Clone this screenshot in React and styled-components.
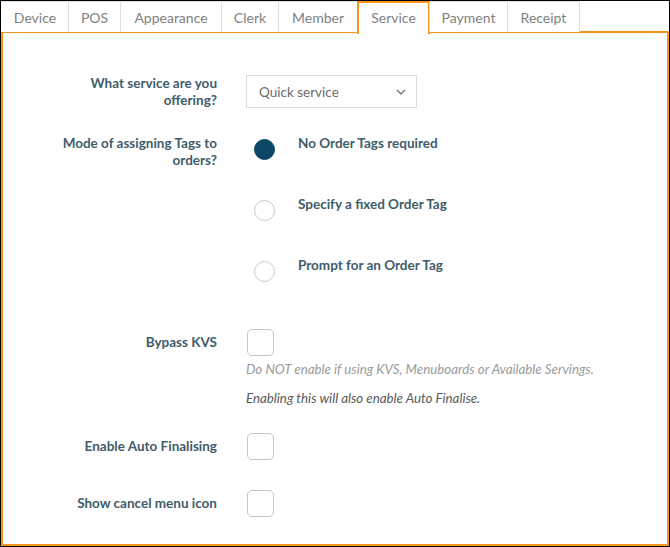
import styled, { createGlobalStyle } from "styled-components";

const GlobalStyle = createGlobalStyle`
  html, body { margin: 0; padding: 0; background: #fff; }
  body { font-family: Lato, "Noto Sans", sans-serif; }
`;

const ORANGE = "#f7941d";

const tabs = [
  { name: "Device", w: 67 },
  { name: "POS", w: 52 },
  { name: "Appearance", w: 101 },
  { name: "Clerk", w: 57 },
  { name: "Member", w: 79 },
  { name: "Service", w: 72 },
  { name: "Payment", w: 78 },
  { name: "Receipt", w: 72 },
];

const radios = [
  { label: "No Order Tags required", checked: true },
  { label: "Specify a fixed Order Tag", checked: false },
  { label: "Prompt for an Order Tag", checked: false },
];

export default function App() {
  return (
    <Frame>
      <GlobalStyle />
      <TabBar>
        {tabs.map((t) => (
          <Tab key={t.name} $w={t.w} $active={t.name === "Service"}>{t.name}</Tab>
        ))}
      </TabBar>
      <Panel>
        <Row $mb={26}>
          <Label>What service are you<br />offering?</Label>
          <Select>
            <span>Quick service</span>
            <svg width="10" height="6" viewBox="0 0 10 6">
              <path d="M1 1l4 4 4-4" fill="none" stroke="#666" strokeWidth="1.2" />
            </svg>
          </Select>
        </Row>
        <Row $mb={51}>
          <Label>Mode of assigning Tags to<br />orders?</Label>
          <RadioList>
            {radios.map((r) => (
              <RadioItem key={r.label}>
                <Radio $checked={r.checked} />
                <RadioText>{r.label}</RadioText>
              </RadioItem>
            ))}
          </RadioList>
        </Row>
        <Row $mb={27}>
          <Label $pt={5}>Bypass KVS</Label>
          <Field>
            <Checkbox />
            <Help>Do NOT enable if using KVS, Menuboards or Available Servings.</Help>
            <Help $dark>Enabling this will also enable Auto Finalise.</Help>
          </Field>
        </Row>
        <Row $mb={30}>
          <Label $pt={5}>Enable Auto Finalising</Label>
          <Checkbox />
        </Row>
        <Row>
          <Label $pt={5}>Show cancel menu icon</Label>
          <Checkbox />
        </Row>
      </Panel>
    </Frame>
  );
}

const Frame = styled.div`
  width: 670px;
  height: 547px;
  box-sizing: border-box;
  border: 1px solid #000;
  display: flex;
  flex-direction: column;
  background: #fff;
`;

const TabBar = styled.div`
  display: flex;
  align-items: flex-start;
  height: 31px;
  flex-shrink: 0;
  position: relative;
  z-index: 1;
`;

const Tab = styled.div`
  box-sizing: border-box;
  width: ${(p) => p.$w + 1}px;
  height: ${(p) => (p.$active ? "33px" : "31px")};
  display: flex;
  align-items: center;
  justify-content: center;
  padding-bottom: ${(p) => (p.$active ? "2px" : "0")};
  font-size: 14px;
  color: #7f7f7f;
  border-style: solid;
  border-width: ${(p) => (p.$active ? "2px 2px 0 2px" : "1px 1px 0 1px")};
  border-color: ${(p) => (p.$active ? ORANGE : "#dedede")};
  margin-left: -1px;
  background: #fff;
  &:first-child { margin-left: 0; border-left-color: #fff; }
`;

const Panel = styled.div`
  flex: 1;
  box-sizing: border-box;
  border: 2px solid ${ORANGE};
  margin-top: -1px;
  padding-top: 42px;
  display: flex;
  flex-direction: column;
`;

const Row = styled.div`
  display: grid;
  grid-template-columns: 214px 1fr;
  column-gap: 29px;
  align-items: start;
  margin-bottom: ${(p) => p.$mb || 0}px;
`;

const Label = styled.div`
  text-align: right;
  font-size: 13.5px;
  font-weight: 700;
  line-height: 17px;
  color: #3f5c6c;
  padding-top: ${(p) => p.$pt || 0}px;
`;

const Select = styled.div`
  box-sizing: border-box;
  width: 171px;
  height: 33px;
  border: 1px solid #dcdcdc;
  display: flex;
  align-items: center;
  justify-content: space-between;
  padding: 0 10px 0 12px;
  font-size: 13.5px;
  color: #6a6a6a;
`;

const RadioList = styled.div`
  display: flex;
  flex-direction: column;
  gap: 40px;
`;

const RadioItem = styled.div`
  display: flex;
  align-items: flex-start;
  gap: 23px;
  height: 21px;
`;

const Radio = styled.span`
  box-sizing: border-box;
  width: 21px;
  height: 21px;
  margin-top: 4px;
  margin-left: 8px;
  border-radius: 50%;
  background: ${(p) => (p.$checked ? "#0c4866" : "#fff")};
  border: 1px solid ${(p) => (p.$checked ? "#0c4866" : "#c8c8c8")};
`;

const RadioText = styled.span`
  font-size: 13.5px;
  font-weight: 700;
  line-height: 17px;
  color: #3f5c6c;
`;

const Field = styled.div`
  display: flex;
  flex-direction: column;
  align-items: flex-start;
`;

const Checkbox = styled.span`
  box-sizing: border-box;
  width: 27px;
  height: 27px;
  margin-left: 1px;
  border: 1px solid #c4c4c4;
  border-radius: 5px;
  display: block;
`;

const Help = styled.div`
  font-size: 13.3px;
  font-style: italic;
  line-height: 16px;
  color: ${(p) => (p.$dark ? "#5a5a5a" : "#9a9a9a")};
  margin-top: ${(p) => (p.$dark ? 13 : 5)}px;
`;
